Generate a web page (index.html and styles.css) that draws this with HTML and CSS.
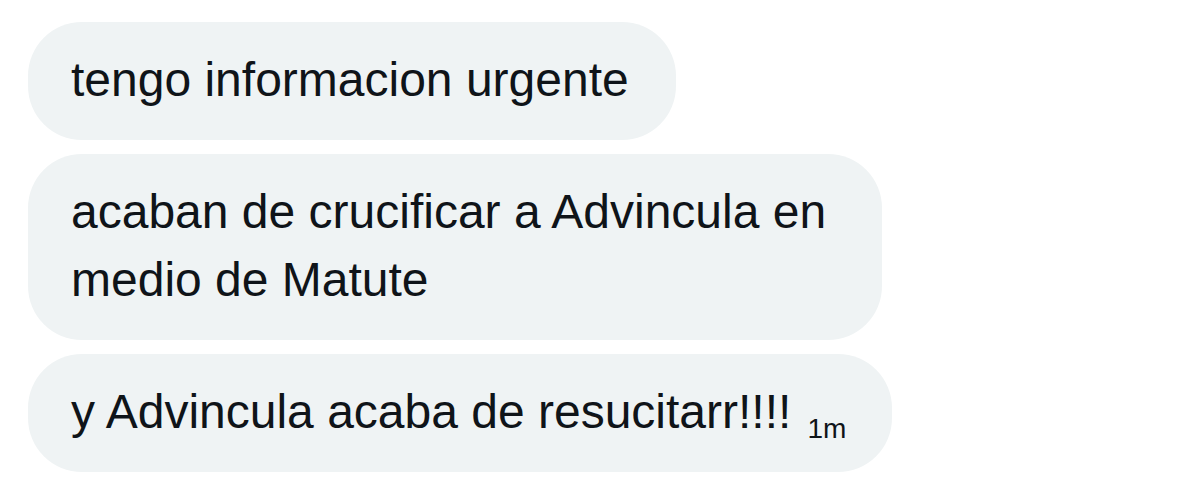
FILE: index.html
```html
<!DOCTYPE html>
<html lang="es">
<head>
    <meta charset="UTF-8">
    <meta name="viewport" content="width=device-width, initial-scale=1.0">
    <title>Mensajes</title>
    <link rel="stylesheet" href="styles.css">
</head>
<body>

    <div class="conversation">
        <div class="bubble">tengo informacion urgente</div>
        <div class="bubble">acaban de crucificar a Advincula en medio de Matute</div>
        <div class="bubble bubble-last">y Advincula acaba de resucitarr!!!!<span class="time">1m</span></div>
    </div>

</body>
</html>
```

FILE: styles.css
```css
body {
    margin: 0;
    background-color: #ffffff;
    font-family: "Liberation Sans", Arial, sans-serif;
    color: #0f1419;
}

.conversation {
    display: flex;
    flex-direction: column;
    align-items: flex-start;
    gap: 14px;
    padding: 22px 28px;
}

.bubble {
    box-sizing: border-box;
    max-width: 854px;
    padding: 24px 47px 26px 43px;
    background-color: #eff3f4;
    border-radius: 54px;
    font-size: 48px;
    line-height: 68px;
}

/* last message carries the timestamp on the same line */
.bubble-last {
    max-width: none;
    white-space: nowrap;
    padding-right: 46px;
}

.time {
    margin-left: 16px;
    font-size: 28px;
    line-height: 1;
    vertical-align: -10px;
}
```
